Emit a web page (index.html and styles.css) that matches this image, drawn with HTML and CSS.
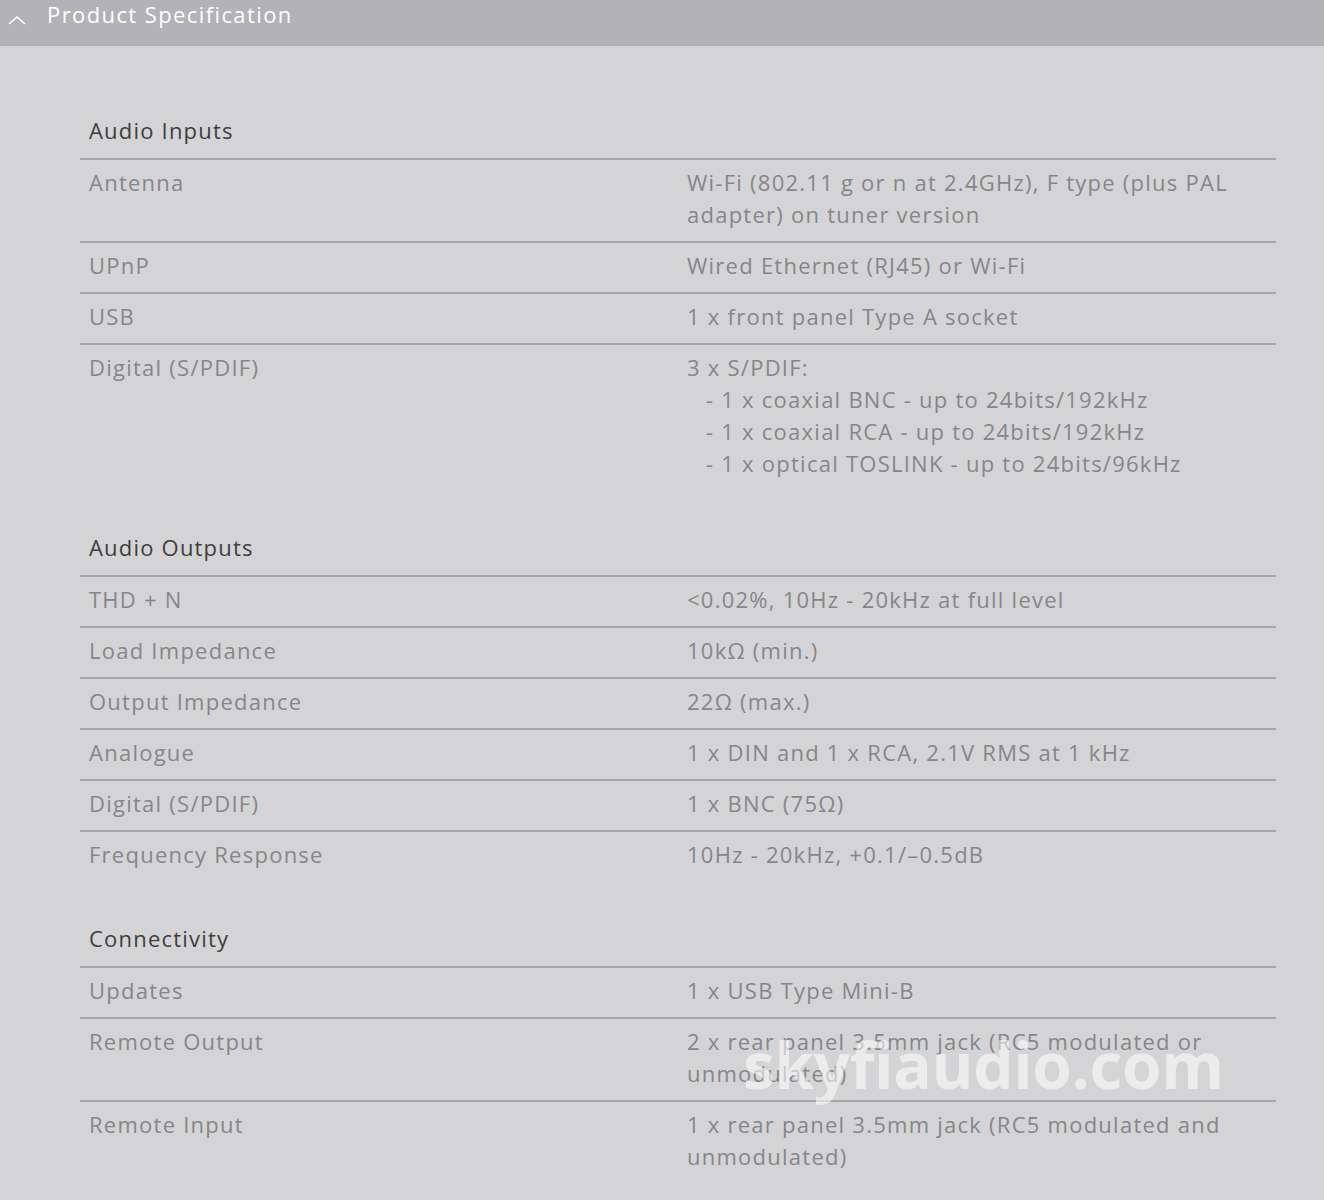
FILE: index.html
```html
<!DOCTYPE html>
<html lang="en">
<head>
  <meta charset="UTF-8" />
  <title>Product Specification</title>
  <link rel="stylesheet" href="styles.css">
</head>
<body>
  <header class="spec-bar">
    <svg class="chevron" width="20" height="12" viewBox="0 0 20 12"><path d="M2 10 L10 3 L18 10" fill="none" stroke="#fff" stroke-width="1.6"/></svg>
    <span>Product Specification</span>
  </header>

  <div class="spec-body">

    <!-- Audio inputs -->
    <section class="spec-group">
      <h3 class="spec-title">Audio Inputs</h3>
      <div class="spec-row"><div class="spec-key">Antenna</div><div class="spec-val">Wi-Fi (802.11 g or n at 2.4GHz), F type (plus PAL adapter) on tuner version</div></div>
      <div class="spec-row"><div class="spec-key">UPnP</div><div class="spec-val">Wired Ethernet (RJ45) or Wi-Fi</div></div>
      <div class="spec-row"><div class="spec-key">USB</div><div class="spec-val">1 x front panel Type A socket</div></div>
      <div class="spec-row">
        <div class="spec-key">Digital (S/PDIF)</div>
        <div class="spec-val">
          3 x S/PDIF:
          <div class="sub">- 1 x coaxial BNC - up to 24bits/192kHz</div>
          <div class="sub">- 1 x coaxial RCA - up to 24bits/192kHz</div>
          <div class="sub">- 1 x optical TOSLINK - up to 24bits/96kHz</div>
        </div>
      </div>
    </section>

    <!-- Audio outputs -->
    <section class="spec-group">
      <h3 class="spec-title">Audio Outputs</h3>
      <div class="spec-row"><div class="spec-key">THD + N</div><div class="spec-val">&lt;0.02%, 10Hz - 20kHz at full level</div></div>
      <div class="spec-row"><div class="spec-key">Load Impedance</div><div class="spec-val">10kΩ (min.)</div></div>
      <div class="spec-row"><div class="spec-key">Output Impedance</div><div class="spec-val">22Ω (max.)</div></div>
      <div class="spec-row"><div class="spec-key">Analogue</div><div class="spec-val">1 x DIN and 1 x RCA, 2.1V RMS at 1 kHz</div></div>
      <div class="spec-row"><div class="spec-key">Digital (S/PDIF)</div><div class="spec-val">1 x BNC (75Ω)</div></div>
      <div class="spec-row"><div class="spec-key">Frequency Response</div><div class="spec-val">10Hz - 20kHz, +0.1/–0.5dB</div></div>
    </section>

    <!-- Connectivity -->
    <section class="spec-group">
      <h3 class="spec-title">Connectivity</h3>
      <div class="spec-row"><div class="spec-key">Updates</div><div class="spec-val">1 x USB Type Mini-B</div></div>
      <div class="spec-row"><div class="spec-key">Remote Output</div><div class="spec-val">2 x rear panel 3.5mm jack (RC5 modulated or unmodulated)</div></div>
      <div class="spec-row"><div class="spec-key">Remote Input</div><div class="spec-val">1 x rear panel 3.5mm jack (RC5 modulated and unmodulated)</div></div>
    </section>

    <div class="watermark">skyfiaudio.com</div>
  </div>
</body>
</html>
```

FILE: styles.css
```css
body {
  font-family: 'Open Sans', 'Lato', sans-serif;
  background: #d4d4d6;
  margin: 0;
  padding: 0;
}

.spec-bar {
  height: 46px;
  background: #b3b2b6;
  color: #fff;
  display: flex;
  align-items: flex-start;
  font-size: 22px;
  line-height: 28px;
  letter-spacing: 1.4px;
  box-sizing: border-box;
}

.spec-bar .chevron {
  margin: 14px 0 0 7px;
}

.spec-bar span {
  margin-left: 20px;
}

.spec-body {
  position: relative;
  padding: 27px 48px 0 80px;
}

.spec-group {
  margin-top: 34px;
}

.spec-title {
  margin: 0;
  font-weight: normal;
  font-size: 22px;
  line-height: 32px;
  letter-spacing: 1.2px;
  color: #3e3e40;
  padding: 7px 9px 12px;
  border-bottom: 2px solid #a7a7aa;
}

.spec-row {
  display: grid;
  grid-template-columns: 1fr 1fr;
  font-size: 22px;
  line-height: 32px;
  letter-spacing: 1.25px;
  color: #86868a;
  border-bottom: 2px solid #a7a7aa;
}

.spec-row:last-child {
  border-bottom: none;
}

.spec-key,
.spec-val {
  padding: 6px 9px 11px;
}

.spec-val .sub {
  padding-left: 19px;
}

.watermark {
  position: absolute;
  left: 743px;
  top: 975px;
  font-size: 64px;
  font-weight: bold;
  color: rgba(255, 255, 255, 0.55);
  letter-spacing: -0.4px;
  pointer-events: none;
}
```
